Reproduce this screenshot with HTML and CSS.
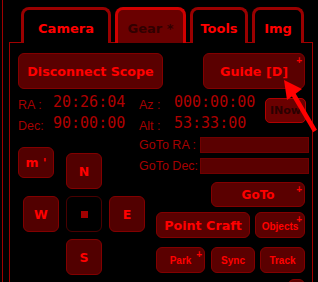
FILE: index.html
```html
<!DOCTYPE html>
<html>
<head>
<meta charset="utf-8">
<link rel="stylesheet" href="styles.css">
</head>
<body>
<div class="frame">
  <div class="tabs">
    <div class="tab tab-cam">Camera</div>
    <div class="tab tab-gear tab-sel">Gear *</div>
    <div class="tab tab-tools">Tools</div>
    <div class="tab tab-img">Img</div>
  </div>
  <div class="panel">
    <div class="row-top">
      <div class="btn btn-disc">Disconnect Scope</div>
      <div class="btn btn-guide">Guide [D]<span class="plus">+</span></div>
    </div>
    <div class="coords">
      <span class="lbl">RA :</span><span class="val">20:26:04</span>
      <span class="lbl">Az :</span><span class="val">000:00:00</span>
      <div class="btn-now">INow</div>
      <span class="lbl">Dec:</span><span class="val">90:00:00</span>
      <span class="lbl">Alt :</span><span class="val">53:33:00</span>
    </div>
    <div class="lower">
      <div class="pad">
        <div class="btn dir btn-m">m '</div>
        <div class="btn dir btn-n">N</div>
        <div></div>
        <div class="btn dir btn-w">W</div>
        <div class="btn dir btn-stop"><span class="sq"></span></div>
        <div class="btn dir">E</div>
        <div></div>
        <div class="btn dir">S</div>
      </div>
      <div class="side">
        <div class="goto-row"><span class="glbl">GoTo RA :</span><span class="inp"></span></div>
        <div class="goto-row goto-row2"><span class="glbl">GoTo Dec:</span><span class="inp"></span></div>
        <div class="btn btn-goto">GoTo<span class="plus">+</span></div>
        <div class="brow brow1">
          <div class="btn btn-pc">Point Craft</div>
          <div class="btn btn-sm btn-obj"><span class="obj-txt">Objects</span><span class="plus">+</span></div>
        </div>
        <div class="brow brow2">
          <div class="btn btn-sm btn-park">Park<span class="plus">+</span></div>
          <div class="btn btn-sm btn-sync">Sync</div>
          <div class="btn btn-sm btn-track">Track</div>
        </div>
        <div class="brow brow3">
          <div class="btn btn-stub"></div>
        </div>
      </div>
    </div>
  </div>
</div>
<svg class="arrow" width="318" height="282" viewBox="0 0 318 282">
  <line x1="292" y1="92" x2="315" y2="131" stroke="#ff0000" stroke-width="4.5"/>
  <polygon points="284,80 302,89 287,100" fill="#ff0000"/>
</svg>
</body>
</html>
```

FILE: styles.css
```css
html, body {
  margin: 0;
  padding: 0;
  background: #000;
}
body {
  width: 318px;
  height: 282px;
  overflow: hidden;
  position: relative;
}
.frame {
  margin-left: 2px;
  border-left: 1px solid #a00000;
  padding-left: 6px;
  height: 282px;
  box-sizing: border-box;
}
.tabs {
  display: flex;
  gap: 4px;
  padding-top: 7px;
  margin-left: 12px;
  height: 36px;
  margin-bottom: -1px;
  position: relative;
  z-index: 1;
}
.tab {
  box-sizing: border-box;
  height: 36px;
  border: 3px solid #9a0000;
  border-bottom: none;
  border-radius: 8px 8px 0 0;
  background: #000;
  color: #ff0000;
  font: bold 13px "DejaVu Sans", sans-serif;
  display: flex;
  align-items: center;
  justify-content: center;
  padding-top: 3px;
}
.tab-cam { width: 90px; }
.tab-gear { width: 71px; }
.tab-tools { width: 58px; }
.tab-img { width: 52px; }
.tab-sel {
  background: #6a0000;
  border-color: #d00000;
  color: #300000;
}
.panel {
  box-sizing: border-box;
  width: 304px;
  height: 240px;
  border: 1px solid #a00000;
  border-bottom: none;
  padding: 10px 3px 0 8px;
}
.btn {
  box-sizing: border-box;
  background: #5a0000;
  border: 1px solid #820000;
  border-radius: 6px;
  color: #ff0000;
  display: flex;
  align-items: center;
  justify-content: center;
  font: bold 12.7px "DejaVu Sans", sans-serif;
  position: relative;
}
.plus {
  position: absolute;
  top: 2px;
  right: 2px;
  font: bold 10px "Liberation Sans", sans-serif;
  line-height: 10px;
  color: #ff0000;
}
.row-top {
  display: flex;
  justify-content: space-between;
  height: 36px;
}
.btn-disc { width: 145px; }
.btn-guide { width: 102px; margin-right: 4px; }
.coords {
  margin-top: 7px;
  display: grid;
  grid-template-columns: 35px 86px 35px 91px 41px;
  grid-template-rows: 21px 20px;
  align-items: start;
}
.lbl, .glbl {
  font: 12.5px "Liberation Sans", sans-serif;
  color: #a50000;
  line-height: 18px;
  white-space: nowrap;
}
.val {
  font: 15px "DejaVu Sans Mono", monospace;
  color: #b00000;
  line-height: 13px;
  white-space: nowrap;
}
.btn-now {
  grid-column: 5;
  grid-row: 1 / span 2;
  margin-top: 2px;
  box-sizing: border-box;
  height: 25px;
  width: 41px;
  background: #6a0000;
  border: 1px solid #b00000;
  border-radius: 5px;
  color: #2a0000;
  font: bold 11px "DejaVu Sans", sans-serif;
  display: flex;
  align-items: center;
  justify-content: center;
}
.lower {
  display: grid;
  grid-template-columns: 121px 170px;
}
.pad {
  margin-top: 10px;
  display: grid;
  grid-template-columns: 41px 36px 36px;
  grid-template-rows: 42px 36px 36px;
  gap: 7px;
  width: 127px;
}
.dir {
  width: 36px;
  height: 36px;
  font-size: 12.5px;
  background: #520000;
}
.btn-m {
  height: 31px;
  align-self: start;
  justify-self: start;
}
.btn-n { align-self: end; }
.btn-w { justify-self: end; }
.btn-stop {
  background: #000;
  border-color: #4a0000;
}
.sq {
  width: 7px;
  height: 7px;
  background: #a00000;
}
.goto-row {
  display: flex;
  height: 16px;
}
.goto-row2 { margin-top: 5px; }
.glbl {
  width: 61px;
  line-height: 16px;
}
.inp {
  box-sizing: border-box;
  width: 109px;
  height: 16px;
  background: #5a0000;
  border: 1px solid #700000;
}
.btn-goto {
  margin-top: 8px;
  margin-left: 72px;
  width: 94px;
  height: 25px;
  font-size: 12px;
}
.brow {
  display: flex;
  margin-left: 17px;
}
.brow1 { margin-top: 5px; gap: 5px; }
.brow2 { margin-top: 9px; }
.brow3 { margin-top: 6px; justify-content: flex-end; width: 149px; }
.btn-pc { width: 94px; height: 26px; }
.btn-sm {
  font: bold 10px "Liberation Sans", sans-serif;
  height: 26px;
}
.btn-obj { width: 50px; }
.obj-txt { padding-top: 3px; line-height: 10px; }
.btn-park { width: 49px; }
.btn-sync { width: 44px; margin-left: 6px; }
.btn-track { width: 45px; margin-left: 5px; }
.btn-stub { width: 17px; height: 20px; }
.arrow {
  position: absolute;
  left: 0;
  top: 0;
  pointer-events: none;
}
```
